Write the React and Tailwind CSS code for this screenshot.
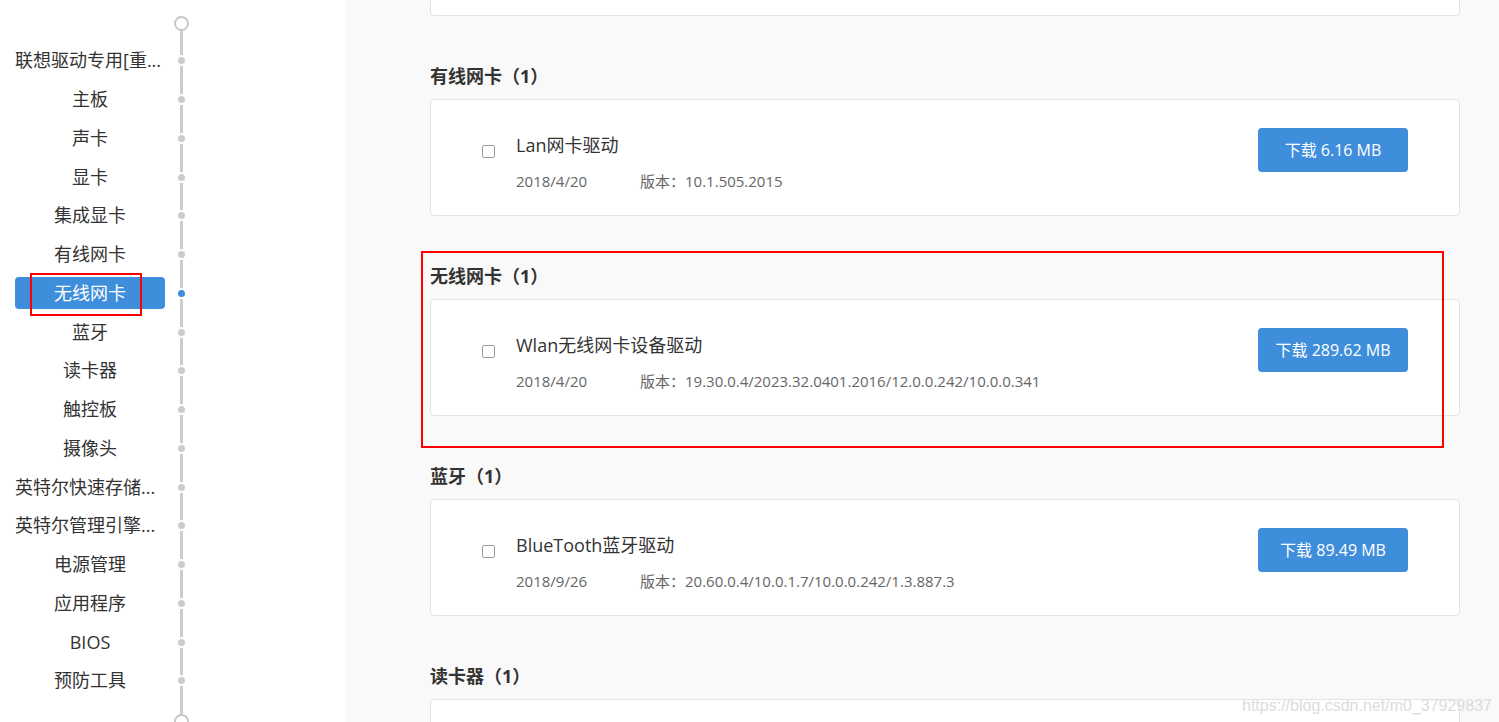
import React from 'react';

const navItems = [
    '联想驱动专用[重...',
    '主板',
    '声卡',
    '显卡',
    '集成显卡',
    '有线网卡',
    '无线网卡',
    '蓝牙',
    '读卡器',
    '触控板',
    '摄像头',
    '英特尔快速存储...',
    '英特尔管理引擎...',
    '电源管理',
    '应用程序',
    'BIOS',
    '预防工具',
];

const sections = [
    {
        title: '有线网卡（1）',
        name: 'Lan网卡驱动',
        date: '2018/4/20',
        version: '10.1.505.2015',
        size: '6.16 MB',
    },
    {
        title: '无线网卡（1）',
        name: 'Wlan无线网卡设备驱动',
        date: '2018/4/20',
        version: '19.30.0.4/2023.32.0401.2016/12.0.0.242/10.0.0.341',
        size: '289.62 MB',
    },
    {
        title: '蓝牙（1）',
        name: 'BlueTooth蓝牙驱动',
        date: '2018/9/26',
        version: '20.60.0.4/10.0.1.7/10.0.0.242/1.3.887.3',
        size: '89.49 MB',
    },
];

// Left side timeline navigation
const Sidebar = ({ active }) => (
    <aside className="relative w-[345px] shrink-0 bg-white h-[722px] overflow-hidden">
        <div className="absolute left-[180px] top-[30px] w-[3px] h-[686px] bg-[#cccccc]"></div>
        <div className="relative pl-[15px]">
            <div className="flex h-[41.6px]">
                <div className="w-[150px]"></div>
                <div className="w-[33px] flex justify-center">
                    <div className="mt-[16px] w-[15px] h-[15px] rounded-full border-2 border-[#c8c8c8] bg-white"></div>
                </div>
            </div>
            {navItems.map((item) => {
                const isActive = item === active;
                const cut = item.endsWith('...');
                return (
                    <div key={item} className="flex items-center h-[38.75px]">
                        <div
                            className={
                                isActive
                                    ? 'w-[150px] h-8 rounded-[4px] bg-[#3f8edb] text-white flex items-center justify-center text-[18px]'
                                    : cut
                                    ? 'w-[150px] h-8 text-[#333333] flex items-center justify-start text-[18px] whitespace-nowrap overflow-hidden'
                                    : 'w-[150px] h-8 text-[#333333] flex items-center justify-center text-[18px] whitespace-nowrap'
                            }
                        >
                            {item}
                        </div>
                        <div className="w-[33px] flex justify-center">
                            <div
                                className={
                                    isActive
                                        ? 'w-[7px] h-[7px] rounded-full bg-[#3f8edb] ring-2 ring-white'
                                        : 'w-[7px] h-[7px] rounded-full bg-[#cccccc] ring-2 ring-white'
                                }
                            ></div>
                        </div>
                    </div>
                );
            })}
            <div className="flex mt-[14px]">
                <div className="w-[150px]"></div>
                <div className="w-[33px] flex justify-center">
                    <div className="w-[15px] h-[15px] rounded-full border-2 border-[#c8c8c8] bg-white"></div>
                </div>
            </div>
        </div>
    </aside>
);

const DriverCard = ({ name, date, version, size }) => (
    <div className="w-[1030px] h-[117px] bg-white border border-[#e3e3e3] rounded-[4px] flex justify-between items-start pl-[51px] pr-[51px]">
        <div className="flex items-start">
            <div className="mt-[45px] w-[13px] h-[13px] rounded-[2px] border border-[#9a9a9a] bg-white"></div>
            <div className="ml-[21px] pt-[33px] flex flex-col">
                <div className="text-[18px] leading-6 text-[#333333]">{name}</div>
                <div className="mt-[14px] flex text-[15px] leading-5 text-[#666666]">
                    <span className="w-[124px]">{date}</span>
                    <span>版本：{version}</span>
                </div>
            </div>
        </div>
        <button className="mt-[28px] w-[150px] h-[44px] rounded-[4px] bg-[#3f8edb] text-white text-[16px]">
            下载 {size}
        </button>
    </div>
);

export default function App() {
    return (
        <div className="relative flex w-[1499px] h-[722px] overflow-hidden bg-[#f9f9f9] font-['Open_Sans','Noto_Sans_CJK_SC',sans-serif]">
            <Sidebar active="无线网卡" />

            <main className="flex-1 pl-[85px] h-[722px] overflow-hidden">
                {/* bottom of the card above (scrolled out) */}
                <div className="w-[1030px] h-[16px] bg-white border-x border-b border-[#e3e3e3] rounded-b-[4px]"></div>

                {sections.map((s) => (
                    <section key={s.title} className="mt-[48px]">
                        <h2 className="h-6 leading-6 text-[18px] font-bold text-[#333333]">{s.title}</h2>
                        <div className="mt-[11px]">
                            <DriverCard {...s} />
                        </div>
                    </section>
                ))}

                <section className="mt-[48px]">
                    <h2 className="h-6 leading-6 text-[18px] font-bold text-[#333333]">读卡器（1）</h2>
                    <div className="mt-[11px] w-[1030px] h-[60px] bg-white border border-[#e3e3e3] rounded-[4px]"></div>
                </section>
            </main>

            {/* red annotation boxes from the screenshot */}
            <div className="absolute left-[30px] top-[273px] w-[112px] h-[43px] border-2 border-[#ff0000]"></div>
            <div className="absolute left-[421px] top-[251px] w-[1023px] h-[197px] border-2 border-[#ff0000]"></div>

            <div className="absolute left-[1242px] top-[694px] text-[16px] whitespace-nowrap font-['Liberation_Sans',sans-serif] text-[#dcdcdc]">
                https://blog.csdn.net/m0_37929837
            </div>
        </div>
    );
}
